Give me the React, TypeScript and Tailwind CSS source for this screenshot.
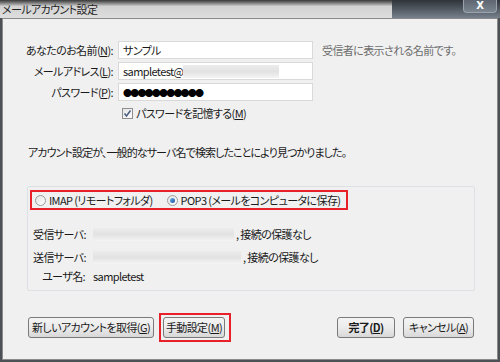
import React from "react";

const font = "font-['Noto_Sans_CJK_JP',sans-serif] [font-feature-settings:'palt'] tracking-[-0.6px] whitespace-nowrap";

function Key({ k }: { k: string }) {
  return (
    <>
      (<span className="underline underline-offset-1">{k}</span>)
    </>
  );
}

function Field({ children }: { children?: React.ReactNode }) {
  return (
    <div className="w-[195px] h-[18px] bg-white border border-[#d9d9d9] flex items-center pl-[4px] text-[11px] text-[#1a1a1a]">
      {children}
    </div>
  );
}

function Blur({ w }: { w: string }) {
  return (
    <div
      className={`${w} h-[13px] bg-gradient-to-b from-[#ececec] via-[#e2e2e2] to-[#f4f4f4]`}
    />
  );
}

function Radio({ on }: { on?: boolean }) {
  return (
    <span className="w-[11px] h-[11px] shrink-0 rounded-full border border-[#9a9a9a] bg-gradient-to-br from-[#e2e2e2] to-[#ffffff] flex items-center justify-center">
      {on && (
        <span className="w-[5px] h-[5px] rounded-full bg-gradient-to-br from-[#6fb4ec] to-[#1b4f9a]" />
      )}
    </span>
  );
}

function Btn({ children, w, bold }: { children: React.ReactNode; w: string; bold?: boolean }) {
  return (
    <button
      className={`${w} h-[21px] shrink-0 rounded-[3px] border border-[#7a7a7a] bg-gradient-to-b from-[#f4f4f4] via-[#ebebeb] to-[#d8d8d8] text-[11px] text-[#1a1a1a] flex items-center justify-center whitespace-nowrap ${bold ? "font-bold" : ""}`}
    >
      {children}
    </button>
  );
}

export default function App() {
  return (
    <div className={`w-[500px] h-[362px] overflow-hidden bg-[#4d5055] flex flex-col ${font}`}>
      {/* title bar */}
      <div className="h-[18px] flex shrink-0">
        <div className="flex-1 bg-gradient-to-b from-[#3a3a3a] via-[#d2d2d2] via-35% to-[#dedede] pl-[2px] text-[11px] leading-[18px] text-[#1e1e1e]">
          メールアカウント設定
        </div>
        <div className="w-[108px] bg-gradient-to-b from-[#2f343a] to-[#77818c] flex justify-end pr-[3px]">
          <div className="w-[34px] h-[13px] rounded-b-[4px] border border-t-0 border-[#9aa3ad] bg-gradient-to-b from-[#5d6670] to-[#7c8690] flex items-center justify-center text-white text-[10px] font-bold leading-none tracking-normal font-['DejaVu_Sans',sans-serif]">
            X
          </div>
        </div>
      </div>

      {/* dialog body */}
      <div className="flex-1 mx-[2px] mb-[2px] border border-[#8a8a8a] bg-[#f0f0f0] flex flex-col text-[11px] text-[#1a1a1a]">
        <div className="pt-[22px] flex flex-col gap-[3px]">
          <div className="flex items-center">
            <div className="w-[110px] text-right">あなたのお名前<Key k="N" />:</div>
            <div className="ml-[5px]">
              <Field>サンプル</Field>
            </div>
            <div className="ml-[9px] text-[#6d6d6d]">受信者に表示される名前です。</div>
          </div>
          <div className="flex items-center">
            <div className="w-[110px] text-right">メールアドレス<Key k="L" />:</div>
            <div className="ml-[5px]">
              <Field>
                <span>sampletest@</span>
                <Blur w="w-[96px]" />
              </Field>
            </div>
          </div>
          <div className="flex items-center">
            <div className="w-[110px] text-right">パスワード<Key k="P" />:</div>
            <div className="ml-[5px]">
              <Field>
                <span className="text-[9px] tracking-[-1.8px] text-black leading-none">●●●●●●●●●●●</span>
              </Field>
            </div>
          </div>
        </div>

        <div className="mt-[4px] h-[16px] flex items-center pl-[119px] gap-[3px]">
          <span className="w-[11px] h-[11px] border border-[#8f8f8f] bg-gradient-to-br from-[#e4e4e4] to-white flex items-center justify-center">
            <svg width="9" height="9" viewBox="0 0 9 9">
              <path d="M1.5 4.5 L3.5 7 L7.5 1.5" fill="none" stroke="#4b5d80" strokeWidth="1.5" />
            </svg>
          </span>
          <span>パスワードを記憶する<Key k="M" /></span>
        </div>

        <div className="mt-[23px] h-[16px] leading-[16px] pl-[25px] tracking-[-0.9px]">
          アカウント設定が、一般的なサーバ名で検索したことにより見つかりました。
        </div>

        {/* group box */}
        <div className="mt-[26px] ml-[24px] w-[448px] h-[105px] border border-[#dde1e6] rounded-[2px] pt-[3px] pl-[2px] flex flex-col">
          <div className="w-[318px] h-[20px] border-2 border-[#e8202a] flex items-center pl-[3px] gap-[3px]">
            <Radio />
            <span>IMAP (リモートフォルダ)</span>
            <span className="ml-[8px]" />
            <Radio on />
            <span>POP3 (メールをコンピュータに保存)</span>
          </div>
          <div className="mt-[16px] flex items-center h-[16px]">
            <div className="w-[55px] pl-[3px]">受信サーバ:</div>
            <div className="ml-[8px] flex items-center">
              <Blur w="w-[141px]" />
              <span className="ml-[2px]">, 接続の保護なし</span>
            </div>
          </div>
          <div className="mt-[7px] flex items-center h-[16px]">
            <div className="w-[55px] pl-[3px]">送信サーバ:</div>
            <div className="ml-[8px] flex items-center">
              <Blur w="w-[148px]" />
              <span className="ml-[2px]">, 接続の保護なし</span>
            </div>
          </div>
          <div className="mt-[3px] flex items-center h-[16px]">
            <div className="w-[55px] text-right">ユーザ名:</div>
            <div className="ml-[8px]">sampletest</div>
          </div>
        </div>

        {/* buttons */}
        <div className="mt-[22px] flex items-center pl-[25px] pr-[23px]">
          <Btn w="w-[126px]">新しいアカウントを取得<Key k="G" /></Btn>
          <div className="ml-[5px] border-2 border-[#e8202a] p-[2px] pr-[4px]">
            <Btn w="w-[62px]">手動設定<Key k="M" /></Btn>
          </div>
          <div className="flex-1" />
          <Btn w="w-[58px]" bold>完了<Key k="D" /></Btn>
          <div className="ml-[8px]">
            <Btn w="w-[71px]">キャンセル<Key k="A" /></Btn>
          </div>
        </div>
      </div>
    </div>
  );
}
